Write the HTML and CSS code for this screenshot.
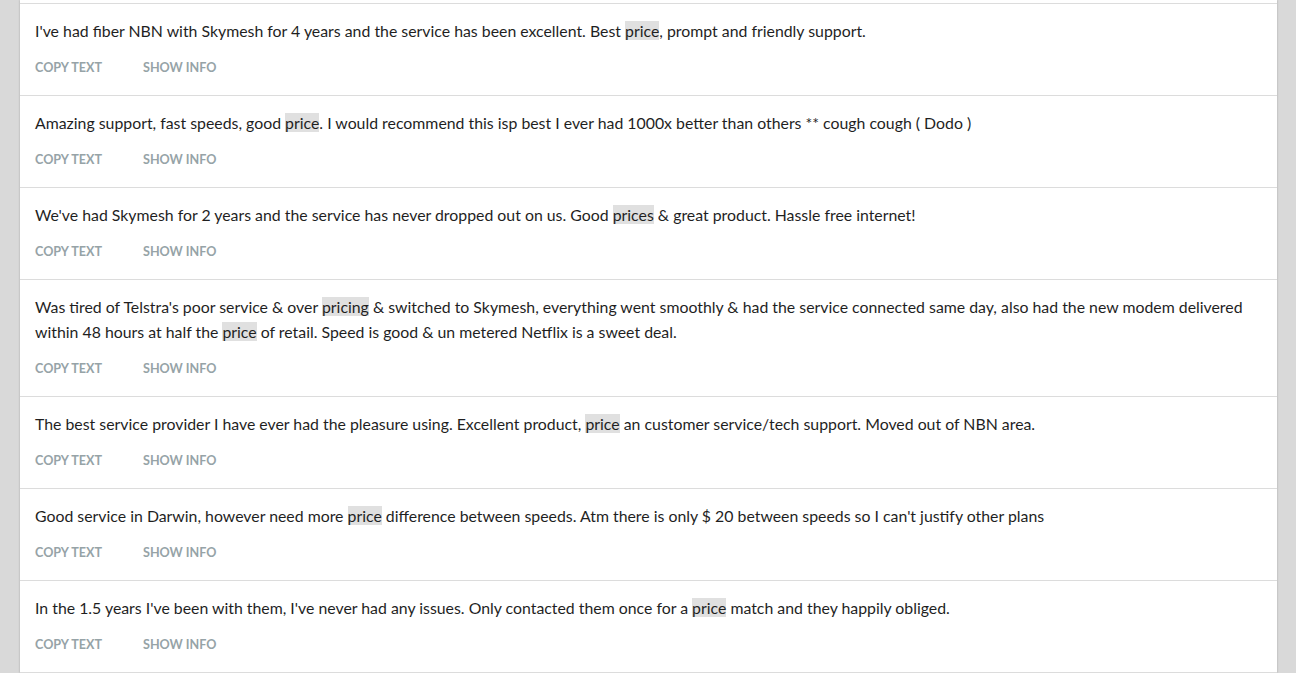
FILE: index.html
```html
<html lang="en">
<head>
    <meta charset="UTF-8">
    <meta name="viewport" content="width=device-width, initial-scale=1.0">
    <title>Reviews</title>
    <link rel="stylesheet" href="styles.css">
</head>
<body>
    <div class="panel">
        <div class="stub"></div>

        <div class="review">
            <p class="review-text">I've had fiber NBN with Skymesh for 4 years and the service has been excellent. Best <span class="hl">price</span>, prompt and friendly support.</p>
            <div class="actions"><a class="btn">Copy text</a><a class="btn">Show info</a></div>
        </div>

        <div class="review">
            <p class="review-text">Amazing support, fast speeds, good <span class="hl">price</span>. I would recommend this isp best I ever had 1000x better than others ** cough cough ( Dodo )</p>
            <div class="actions"><a class="btn">Copy text</a><a class="btn">Show info</a></div>
        </div>

        <div class="review">
            <p class="review-text">We've had Skymesh for 2 years and the service has never dropped out on us. Good <span class="hl">prices</span> &amp; great product. Hassle free internet!</p>
            <div class="actions"><a class="btn">Copy text</a><a class="btn">Show info</a></div>
        </div>

        <div class="review">
            <p class="review-text">Was tired of Telstra's poor service &amp; over <span class="hl">pricing</span> &amp; switched to Skymesh, everything went smoothly &amp; had the service connected same day, also had the new modem delivered within 48 hours at half the <span class="hl">price</span> of retail. Speed is good &amp; un metered Netflix is a sweet deal.</p>
            <div class="actions"><a class="btn">Copy text</a><a class="btn">Show info</a></div>
        </div>

        <div class="review">
            <p class="review-text">The best service provider I have ever had the pleasure using. Excellent product, <span class="hl">price</span> an customer service/tech support. Moved out of NBN area.</p>
            <div class="actions"><a class="btn">Copy text</a><a class="btn">Show info</a></div>
        </div>

        <div class="review">
            <p class="review-text">Good service in Darwin, however need more <span class="hl">price</span> difference between speeds. Atm there is only $ 20 between speeds so I can't justify other plans</p>
            <div class="actions"><a class="btn">Copy text</a><a class="btn">Show info</a></div>
        </div>

        <div class="review">
            <p class="review-text">In the 1.5 years I've been with them, I've never had any issues. Only contacted them once for a <span class="hl">price</span> match and they happily obliged.</p>
            <div class="actions"><a class="btn">Copy text</a><a class="btn">Show info</a></div>
        </div>
    </div>
</body>
</html>
```

FILE: styles.css
```css
body {
  margin: 0;
  background-color: #d9d9d9;
  font-family: Lato, "Open Sans", sans-serif;
  color: #1f1f1f;
  overflow: hidden;
}

.panel {
  margin: 0 19px 0 20px;
  background-color: #fff;
  box-shadow: 0 0 2px rgba(0, 0, 0, 0.25);
}

.stub {
  height: 3px;
  border-bottom: 1px solid #dcdcdc;
}

.review {
  padding: 14px 15px 18px 15px;
  border-bottom: 1px solid #dcdcdc;
}

.review-text {
  margin: 0;
  font-size: 15.85px;
  line-height: 25px;
}

.hl {
  background-color: #e0e0e0;
}

.actions {
  display: flex;
  gap: 41px;
  margin-top: 14px;
  height: 20px;
  align-items: center;
}

.btn {
  font-size: 12.6px;
  font-weight: bold;
  text-transform: uppercase;
  color: #96a3a7;
  cursor: pointer;
}
```
